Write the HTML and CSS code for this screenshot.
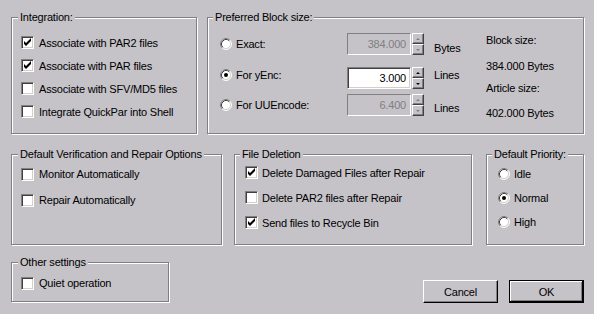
FILE: index.html
```html
<!DOCTYPE html>
<html>
<head>
<meta charset="utf-8">
<link rel="stylesheet" href="styles.css">
</head>
<body>
<svg class="defs" width="0" height="0">
  <symbol id="rb" viewBox="0 0 12 12">
    <circle cx="6" cy="6" r="5" fill="#fff"/>
    <path d="M2.11 9.89A5.5 5.5 0 0 1 9.89 2.11" fill="none" stroke="#808080"/>
    <path d="M9.89 2.11A5.5 5.5 0 0 1 2.11 9.89" fill="none" stroke="#fff"/>
    <path d="M2.82 9.18A4.5 4.5 0 0 1 9.18 2.82" fill="none" stroke="#404040"/>
    <path d="M9.18 2.82A4.5 4.5 0 0 1 2.82 9.18" fill="none" stroke="#d4d0c8"/>
  </symbol>
  <symbol id="ck" viewBox="1 1 11 11">
    <polygon points="3,5 5,7 10,2 10,5 5,10 3,8" fill="#000"/>
  </symbol>
</svg>
<div class="dialog">
  <div class="row row-top">
    <section class="group g-int">
      <div class="legend">Integration:</div>
      <div class="list list-int">
        <label class="item"><span class="cb"><svg width="11" height="11"><use href="#ck"/></svg></span>Associate with PAR2 files</label>
        <label class="item"><span class="cb"><svg width="11" height="11"><use href="#ck"/></svg></span>Associate with PAR files</label>
        <label class="item"><span class="cb"></span>Associate with SFV/MD5 files</label>
        <label class="item"><span class="cb"></span>Integrate QuickPar into Shell</label>
      </div>
    </section>
    <section class="group g-block">
      <div class="legend l5">Preferred Block size:</div>
      <div class="block-body">
        <div class="block-rows">
          <div class="brow r1">
            <label class="ritem"><svg class="rb" width="12" height="12"><use href="#rb"/></svg>Exact:</label>
            <div class="edit disabled">384.000</div>
            <div class="spin disabled"><span class="sb up"></span><span class="sb down"></span></div>
            <span class="unit">Bytes</span>
          </div>
          <div class="brow r2">
            <label class="ritem"><svg class="rb" width="12" height="12"><use href="#rb"/><circle cx="6" cy="6" r="2" fill="#000"/></svg>For yEnc:</label>
            <div class="edit">3.000</div>
            <div class="spin"><span class="sb up"></span><span class="sb down"></span></div>
            <span class="unit">Lines</span>
          </div>
          <div class="brow r3">
            <label class="ritem"><svg class="rb" width="12" height="12"><use href="#rb"/></svg>For UUEncode:</label>
            <div class="edit disabled">6.400</div>
            <div class="spin disabled"><span class="sb up"></span><span class="sb down"></span></div>
            <span class="unit">Lines</span>
          </div>
        </div>
        <div class="info">
          <div class="info-line i1">Block size:</div>
          <div class="info-line i2">384.000 Bytes</div>
          <div class="info-line i3">Article size:</div>
          <div class="info-line i4">402.000 Bytes</div>
        </div>
      </div>
    </section>
  </div>

  <div class="row row-mid">
    <section class="group g-verif">
      <div class="legend">Default Verification and Repair Options</div>
      <div class="list list-verif">
        <label class="item"><span class="cb"></span>Monitor Automatically</label>
        <label class="item"><span class="cb"></span>Repair Automatically</label>
      </div>
    </section>
    <section class="group g-del">
      <div class="legend l5">File Deletion</div>
      <div class="list list-del">
        <label class="item"><span class="cb"><svg width="11" height="11"><use href="#ck"/></svg></span>Delete Damaged Files after Repair</label>
        <label class="item"><span class="cb"></span>Delete PAR2 files after Repair</label>
        <label class="item"><span class="cb"><svg width="11" height="11"><use href="#ck"/></svg></span>Send files to Recycle Bin</label>
      </div>
    </section>
    <section class="group g-prio">
      <div class="legend l5">Default Priority:</div>
      <div class="list list-prio">
        <label class="item"><svg class="rb" width="12" height="12"><use href="#rb"/></svg>Idle</label>
        <label class="item"><svg class="rb" width="12" height="12"><use href="#rb"/><circle cx="6" cy="6" r="2" fill="#000"/></svg>Normal</label>
        <label class="item"><svg class="rb" width="12" height="12"><use href="#rb"/></svg>High</label>
      </div>
    </section>
  </div>

  <div class="row row-bottom">
    <section class="group g-other">
      <div class="legend">Other settings</div>
      <div class="list list-other">
        <label class="item"><span class="cb"></span>Quiet operation</label>
      </div>
    </section>
    <div class="buttons">
      <button class="btn">Cancel</button>
      <button class="btn btn-default">OK</button>
    </div>
  </div>
</div>
</body>
</html>
```

FILE: styles.css
```css
* { box-sizing: border-box; }
html, body { margin: 0; padding: 0; }
body {
  background: #c5c3c8;
  font-family: "Liberation Sans", Arial, sans-serif;
  font-size: 11px;
  letter-spacing: -0.2px;
  color: #000;
  width: 594px;
  height: 314px;
  overflow: hidden;
}
.defs { position: absolute; width: 0; height: 0; }
.dialog {
  display: flex;
  flex-direction: column;
  padding: 17px 10px 0 11px;
}
.row { display: flex; }
.row-top { height: 117px; }
.row-mid { height: 91px; margin-top: 20px; }
.row-bottom { margin-top: 17px; align-items: flex-start; }

.group {
  border: 1px solid #808080;
  box-shadow: inset 1px 1px 0 #fff, 1px 1px 0 #fff;
  display: flex;
  flex-direction: column;
  height: 100%;
}
.legend {
  align-self: flex-start;
  margin: -7px 0 0 6px;
  padding: 0 2px;
  height: 13px;
  line-height: 13px;
  background: #c5c3c8;
  white-space: nowrap;
}
.legend.l5 { margin-left: 5px; }

.g-int { width: 186px; }
.g-block { width: 377px; margin-left: 10px; }
.g-verif { width: 211px; }
.g-del { width: 238px; margin-left: 12px; }
.g-prio { width: 98px; margin-left: 14px; }
.g-other { width: 158px; height: 40px; }

.list { display: flex; flex-direction: column; }
.item { display: flex; align-items: center; white-space: nowrap; }
.list-int { padding: 7px 0 0 9px; }
.list-int .item { height: 23px; }
.list-verif { padding-left: 9px; }
.list-verif .item { height: 26px; }
.list-del { padding-left: 10px; margin-top: -1px; }
.list-del .item { height: 25px; }
.list-prio { padding-left: 11px; margin-top: 1px; }
.list-prio .item { height: 24px; }
.list-other { padding-left: 9px; }
.list-other .item { height: 28px; }

.cb {
  flex: none;
  width: 13px;
  height: 13px;
  margin-right: 5px;
  background: #fff;
  border: 1px solid;
  border-color: #808080 #fff #fff #808080;
  box-shadow: inset 1px 1px 0 #404040, inset -1px -1px 0 #d4d0c8;
}
.cb svg { display: block; }
.list-del .cb { margin-right: 4px; }
.rb { flex: none; display: block; margin-right: 4px; }

.block-body { display: flex; padding-left: 12px; }
.block-rows { display: flex; flex-direction: column; padding-top: 9px; }
.brow { display: flex; align-items: flex-start; height: 22px; }
.r2 { margin-top: 12px; }
.r3 { margin-top: 5px; }
.ritem { width: 127px; height: 22px; display: flex; align-items: center; white-space: nowrap; }
.r2 .ritem { height: 16px; }
.edit {
  width: 64px;
  height: 22px;
  background: #fff;
  border: 1px solid;
  border-color: #808080 #fff #fff #808080;
  box-shadow: inset 1px 1px 0 #404040, inset -1px -1px 0 #d4d0c8;
  display: flex;
  align-items: center;
  justify-content: flex-end;
  padding-right: 4px;
}
.edit.disabled {
  background: #c5c3c8;
  color: #808080;
  box-shadow: none;
}
.spin { display: flex; flex-direction: column; justify-content: space-between; width: 12px; height: 22px; margin-left: 1px; }
.sb {
  height: 11px;
  background: #c5c3c8;
  border: 1px solid;
  border-color: #fff #404040 #404040 #fff;
  box-shadow: inset -1px -1px 0 #808080;
  display: flex;
  align-items: center;
  justify-content: center;
}
.sb::after {
  content: "";
  width: 0;
  height: 0;
  border-left: 2px solid transparent;
  border-right: 2px solid transparent;
}
.up::after { border-bottom: 2px solid #000; }
.down::after { border-top: 2px solid #000; }
.spin.disabled .up::after { border-bottom-color: #808080; }
.spin.disabled .down::after { border-top-color: #808080; }
.unit { width: 40px; margin-left: 10px; line-height: 13px; }
.r1 .unit { margin-top: 9px; }
.r2 .unit { margin-top: 2px; }
.r3 .unit { margin-top: 8px; }

.info { display: flex; flex-direction: column; margin-left: 12px; padding-top: 10px; }
.info-line { line-height: 13px; height: 13px; white-space: nowrap; }
.i2 { margin-top: 13px; }
.i3 { margin-top: 9px; }
.i4 { margin-top: 12px; }

.buttons { display: flex; gap: 11px; margin-left: auto; margin-top: 18px; }
.btn {
  width: 75px;
  height: 23px;
  padding: 0;
  font: inherit;
  letter-spacing: inherit;
  color: #000;
  background: #c5c3c8;
  border: 1px solid;
  border-color: #fff #000 #000 #fff;
  box-shadow: inset -1px -1px 0 #808080;
  display: flex;
  align-items: center;
  justify-content: center;
}
.btn-default {
  border-color: #000;
  box-shadow: inset -1px -1px 0 #000, inset 1px 1px 0 #fff, inset -2px -2px 0 #808080;
}
```
